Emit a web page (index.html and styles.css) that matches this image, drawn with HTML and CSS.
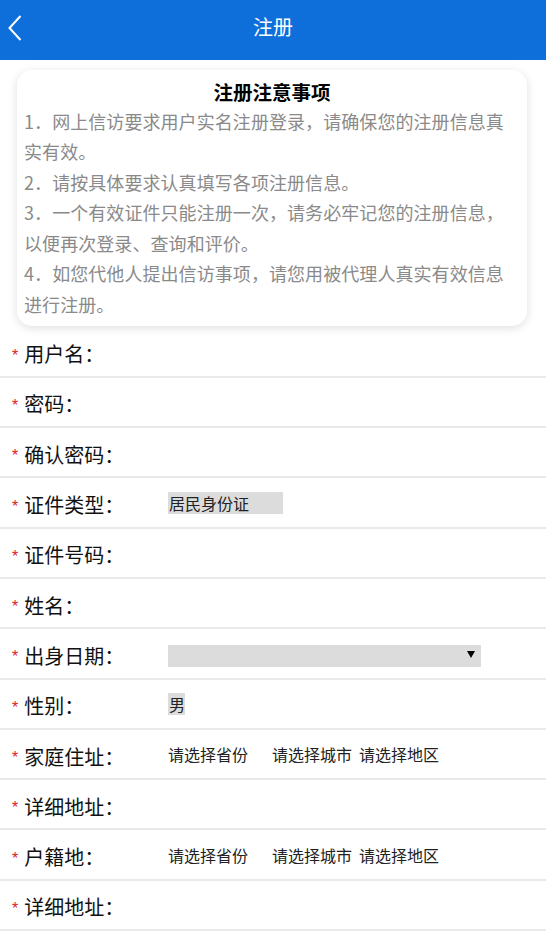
FILE: index.html
```html
<!DOCTYPE html>
<html lang="zh-CN">
<head>
<meta charset="utf-8">
<title>注册</title>
<link rel="stylesheet" href="styles.css">
</head>
<body>
<header class="topbar">
  <span class="back"><svg width="14" height="26" viewBox="0 0 14 26"><path d="M12.5 1 L1.5 13 L12.5 25" fill="none" stroke="#fff" stroke-width="2" stroke-linejoin="miter"/></svg></span>
  <h1 class="title">注册</h1>
</header>
<main>
  <section class="notice">
    <h2 class="notice-title">注册注意事项</h2>
    <p class="notice-text">1．网上信访要求用户实名注册登录，请确保您的注册信息真实有效。</p>
    <p class="notice-text">2．请按具体要求认真填写各项注册信息。</p>
    <p class="notice-text">3．一个有效证件只能注册一次，请务必牢记您的注册信息，以便再次登录、查询和评价。</p>
    <p class="notice-text">4．如您代他人提出信访事项，请您用被代理人真实有效信息进行注册。</p>
  </section>
  <form class="form">
    <div class="row"><label class="label"><span class="star">*</span>用户名：</label></div>
    <div class="row"><label class="label"><span class="star">*</span>密码：</label></div>
    <div class="row"><label class="label"><span class="star">*</span>确认密码：</label></div>
    <div class="row"><label class="label"><span class="star">*</span>证件类型：</label><span class="select">居民身份证</span></div>
    <div class="row"><label class="label"><span class="star">*</span>证件号码：</label></div>
    <div class="row"><label class="label"><span class="star">*</span>姓名：</label></div>
    <div class="row"><label class="label"><span class="star">*</span>出身日期：</label><span class="select date"><span class="arrow"></span></span></div>
    <div class="row"><label class="label"><span class="star">*</span>性别：</label><span class="select gender">男</span></div>
    <div class="row"><label class="label"><span class="star">*</span>家庭住址：</label><span class="area prov">请选择省份</span><span class="area city">请选择城市</span><span class="area dist">请选择地区</span></div>
    <div class="row"><label class="label"><span class="star">*</span>详细地址：</label></div>
    <div class="row"><label class="label"><span class="star">*</span>户籍地：</label><span class="area prov">请选择省份</span><span class="area city">请选择城市</span><span class="area dist">请选择地区</span></div>
    <div class="row"><label class="label"><span class="star">*</span>详细地址：</label></div>
  </form>
</main>
</body>
</html>
```
FILE: styles.css
```css
* { box-sizing: border-box; }
html, body { margin: 0; padding: 0; background: #fff; }
body {
  font-family: "Noto Sans CJK SC", "Noto Sans", sans-serif;
  color: #111;
  width: 546px;
  overflow: hidden;
}
.topbar {
  height: 60px;
  background: #0e6fda;
  display: flex;
  align-items: center;
  justify-content: center;
  position: relative;
}
.back {
  position: absolute;
  left: 8px;
  top: 15px;
  width: 14px;
  height: 26px;
  display: block;
}
.back svg { display: block; }
.title {
  margin: 0 0 6px 0;
  font-size: 20px;
  font-weight: normal;
  color: #fff;
  line-height: 28px;
}
.notice {
  margin: 10px 19px 0 17px;
  padding: 8px 12px 7px 7px;
  border-radius: 15px;
  background: #fff;
  box-shadow: 0 2px 10px rgba(0, 0, 0, 0.13);
}
.notice-title {
  margin: 0;
  text-align: center;
  font-size: 19.5px;
  font-weight: bold;
  line-height: 27.5px;
  color: #000;
  padding-left: 5px;
}
.notice-text {
  margin: 0;
  font-size: 18px;
  letter-spacing: 0.07px;
  line-height: 30.5px;
  color: #8a8a8a;
}
.form { margin: 1.5px 0 0 0; }
.row {
  height: 50.3px;
  border-bottom: 2px solid #e9e9e9;
  display: flex;
  align-items: center;
  padding-left: 12px;
}
.label {
  width: 156px;
  flex: none;
  font-size: 20px;
  color: #111;
  display: flex;
  align-items: center;
  padding-top: 4px;
}
.star {
  color: #e0202a;
  font-family: "Liberation Sans", sans-serif;
  font-size: 16px;
  margin-right: 6px;
  position: relative;
  top: 2px;
}
.select {
  display: block;
  height: 22px;
  line-height: 22px;
  background: #dcdcdc;
  font-size: 16px;
  color: #222;
  padding: 0 1px;
  width: 115px;
}
.select.gender { width: 17px; }
.select.date {
  width: 313px;
  position: relative;
  margin-top: 5px;
}
.arrow {
  position: absolute;
  right: 6px;
  top: 6px;
  width: 0;
  height: 0;
  border-left: 4px solid transparent;
  border-right: 4px solid transparent;
  border-top: 7px solid #000;
}
.area {
  font-size: 16px;
  color: #222;
  line-height: 22px;
}
.prov { width: 104px; }
.city { width: 87px; }
```
